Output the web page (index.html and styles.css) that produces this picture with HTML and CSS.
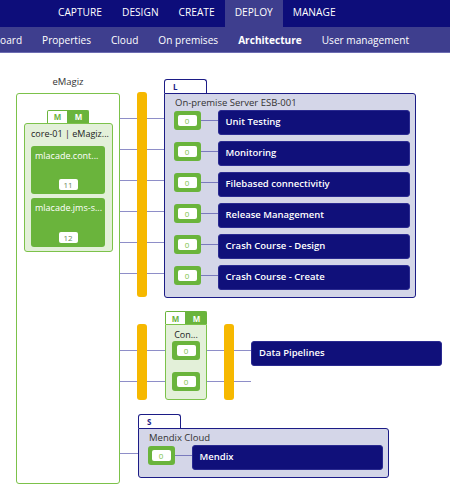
FILE: index.html
```html
<!DOCTYPE html>
<html>
<head>
<meta charset="utf-8">
<link rel="stylesheet" href="styles.css">
</head>
<body>
<header class="nav">
  <div class="topbar">
    <span class="top-item">CAPTURE</span>
    <span class="top-item">DESIGN</span>
    <span class="top-item">CREATE</span>
    <span class="top-item active">DEPLOY</span>
    <span class="top-item">MANAGE</span>
  </div>
  <div class="subbar">
    <span class="sub-item first">Dashboard</span>
    <span class="sub-item">Properties</span>
    <span class="sub-item">Cloud</span>
    <span class="sub-item">On premises</span>
    <span class="sub-item bold">Architecture</span>
    <span class="sub-item">User management</span>
  </div>
</header>
<main class="canvas">
  <!-- connector lines -->
  <div class="hline l1"></div>
  <div class="hline l2"></div>
  <div class="hline l3"></div>
  <div class="hline l4"></div>
  <div class="hline l5"></div>
  <div class="hline l6"></div>
  <div class="hline l7"></div>
  <div class="hline l8"></div>
  <div class="hline l9"></div>
  <div class="hline l10"></div>
  <div class="hline l11"></div>

  <div class="emagiz-label">eMagiz</div>
  <div class="emagiz-box">
    <div class="mtabs"><span class="mtab light">M</span><span class="mtab dark">M</span></div>
    <div class="core">
      <div class="core-title">core-01 | eMagiz...</div>
      <div class="card">
        <div class="card-title">mlacade.cont...</div>
        <div class="card-badge">11</div>
      </div>
      <div class="card">
        <div class="card-title">mlacade.jms-s...</div>
        <div class="card-badge">12</div>
      </div>
    </div>
  </div>

  <div class="ybar y1"></div>
  <div class="ybar y2"></div>
  <div class="ybar y3"></div>

  <div class="server server-l">
    <div class="stab">L</div>
    <div class="sbox">
      <div class="stitle">On-premise Server ESB-001</div>
      <div class="row"><div class="gbadge"><span>0</span></div><div class="link"></div><div class="flow">Unit Testing</div></div>
      <div class="row"><div class="gbadge"><span>0</span></div><div class="link"></div><div class="flow">Monitoring</div></div>
      <div class="row"><div class="gbadge"><span>0</span></div><div class="link"></div><div class="flow">Filebased connectivitiy</div></div>
      <div class="row"><div class="gbadge"><span>0</span></div><div class="link"></div><div class="flow">Release Management</div></div>
      <div class="row"><div class="gbadge"><span>0</span></div><div class="link"></div><div class="flow">Crash Course - Design</div></div>
      <div class="row"><div class="gbadge"><span>0</span></div><div class="link"></div><div class="flow">Crash Course - Create</div></div>
    </div>
  </div>

  <div class="con">
    <div class="mtabs small"><span class="mtab light">M</span><span class="mtab dark">M</span></div>
    <div class="con-box">
      <div class="con-title">Con...</div>
      <div class="gbadge cb"><span>0</span></div>
      <div class="gbadge cb second"><span>0</span></div>
    </div>
  </div>
  <div class="flow dp">Data Pipelines</div>

  <div class="server server-s">
    <div class="stab">S</div>
    <div class="sbox">
      <div class="stitle">Mendix Cloud</div>
      <div class="row"><div class="gbadge"><span>0</span></div><div class="link"></div><div class="flow">Mendix</div></div>
    </div>
  </div>
</main>
</body>
</html>
```

FILE: styles.css
```css
* { box-sizing: border-box; }
html, body { margin: 0; padding: 0; }
body {
  width: 450px;
  height: 491px;
  overflow: hidden;
  background: #ffffff;
  font-family: "Open Sans", "Noto Sans", sans-serif;
}

.nav { display: flex; flex-direction: column; }
.topbar {
  height: 27px;
  background: #0d0d7a;
  display: flex;
  padding-left: 48px;
}
.top-item {
  color: #ffffff;
  font-size: 10.2px;
  padding: 0 10px 4px;
  display: flex;
  align-items: center;
  height: 27px;
}
.top-item.active { background: #3e3e8e; }
.subbar {
  height: 26px;
  background: #3e3e8e;
  border-bottom: 1px solid #6c6cb2;
  display: flex;
  margin-left: -40px;
}
.sub-item {
  color: #ffffff;
  font-size: 10.1px;
  padding: 0 10px;
  display: flex;
  align-items: center;
}
.sub-item.bold { font-weight: 700; }

.canvas {
  position: relative;
  height: 438px;
}

.hline {
  position: absolute;
  height: 1px;
  background: #8e8ec8;
}
.l1 { left: 120px; width: 45px; top: 65px; }
.l2 { left: 120px; width: 45px; top: 96px; }
.l3 { left: 120px; width: 45px; top: 127px; }
.l4 { left: 120px; width: 45px; top: 158px; }
.l5 { left: 120px; width: 45px; top: 189px; }
.l6 { left: 120px; width: 45px; top: 220px; }
.l7 { left: 120px; width: 45px; top: 297px; }
.l8 { left: 120px; width: 45px; top: 328px; }
.l9 { left: 207px; width: 44px; top: 297px; }
.l10 { left: 207px; width: 44px; top: 328px; }
.l11 { left: 120px; width: 18px; top: 400px; }

.emagiz-label {
  position: absolute;
  left: 16px;
  width: 104px;
  top: 22px;
  text-align: center;
  font-size: 9.5px;
  color: #333333;
}
.emagiz-box {
  position: absolute;
  left: 16px;
  top: 40px;
  width: 104px;
  height: 391px;
  border: 1.5px solid #7cc24a;
  border-radius: 3px;
  background: #ffffff;
  padding: 15.5px 5.5px 0;
  display: flex;
  flex-direction: column;
  align-items: center;
}
.mtabs {
  display: flex;
  width: 42px;
  height: 13px;
}
.mtab {
  flex: 1;
  font-size: 8px;
  font-weight: 700;
  display: flex;
  align-items: center;
  justify-content: center;
  border: 1px solid #6ab43c;
  border-bottom: none;
}
.mtab.light { background: #ffffff; color: #6ab43c; border-radius: 2px 0 0 0; }
.mtab.dark { background: #6ab43c; color: #ffffff; border-radius: 0 2px 0 0; }

.core {
  width: 89px;
  height: 129px;
  border: 1.5px solid #7cc24a;
  border-radius: 3px;
  background: #e3f0d9;
  padding: 0 6.5px;
  display: flex;
  flex-direction: column;
  gap: 4px;
}
.core-title {
  font-size: 9px;
  color: #222222;
  text-align: center;
  height: 18px;
  line-height: 19px;
  white-space: nowrap;
}
.card {
  height: 48.5px;
  background: #6ab43c;
  border-radius: 3px;
  display: flex;
  flex-direction: column;
  align-items: center;
  justify-content: space-between;
  padding: 3px 0 4px;
}
.card-title {
  align-self: flex-start;
  padding-left: 4px;
  font-size: 9px;
  color: #ffffff;
  white-space: nowrap;
}
.card-badge {
  width: 19px;
  height: 11px;
  background: #ffffff;
  border-radius: 2px;
  font-size: 8px;
  color: #6a8a5a;
  display: flex;
  align-items: center;
  justify-content: center;
}

.ybar {
  position: absolute;
  width: 10px;
  background: #f6b800;
  border-radius: 3px;
}
.y1 { left: 137px; top: 39px; height: 205px; }
.y2 { left: 137px; top: 271px; height: 76px; }
.y3 { left: 224px; top: 271px; height: 76px; }

.server { position: absolute; display: flex; flex-direction: column; }
.server-l { left: 164px; top: 26px; width: 252px; }
.server-s { left: 138px; top: 361px; width: 251px; }
.stab {
  width: 43px;
  height: 14px;
  background: #ffffff;
  border: 1.5px solid #1c1c86;
  border-bottom: none;
  border-radius: 3px 3px 0 0;
  font-size: 8px;
  font-weight: 700;
  color: #1c1c86;
  padding-left: 8px;
  line-height: 13px;
}
.sbox {
  background: #d4d6e8;
  border: 1.5px solid #1c1c86;
  border-radius: 0 3px 3px 3px;
  padding: 0 5px 8px 8.5px;
  display: flex;
  flex-direction: column;
  gap: 6px;
}
.server-l .sbox { height: 205px; }
.server-s .sbox { height: 50px; }
.stitle {
  font-size: 9.5px;
  color: #333333;
  height: 13px;
  line-height: 18px;
  margin-left: 1.5px;
  margin-bottom: -3px;
}
.row {
  display: flex;
  align-items: flex-start;
  height: 25px;
}
.gbadge {
  width: 27px;
  height: 19px;
  background: #6ab43c;
  border-radius: 3px;
  display: flex;
  align-items: center;
  justify-content: center;
  margin-top: 1px;
  flex: none;
}
.gbadge span {
  width: 19px;
  height: 11px;
  background: #ffffff;
  border-radius: 2px;
  font-size: 8px;
  color: #7cc24a;
  display: flex;
  align-items: center;
  justify-content: center;
}
.link {
  width: 17px;
  height: 1px;
  background: #7a7abd;
  margin-top: 10px;
  flex: none;
}
.flow {
  flex: 1;
  height: 25px;
  background: #10107a;
  border: 1px solid #2a2a90;
  border-radius: 3px;
  color: #ffffff;
  font-size: 9.5px;
  font-weight: 600;
  padding-left: 7px;
  line-height: 21px;
  white-space: nowrap;
}

.con {
  position: absolute;
  left: 165px;
  top: 258px;
  width: 42px;
  display: flex;
  flex-direction: column;
}
.con-box {
  height: 76px;
  background: #e3f0d9;
  border: 1.5px solid #7cc24a;
  border-radius: 0 0 3px 3px;
  display: flex;
  flex-direction: column;
  align-items: center;
}
.con-title {
  font-size: 9px;
  color: #222222;
  height: 16px;
  line-height: 20px;
}
.gbadge.cb { width: 28px; margin-top: 0; }
.gbadge.cb.second { margin-top: 12px; }

.flow.dp {
  position: absolute;
  left: 251px;
  top: 288px;
  width: 191px;
}
```
